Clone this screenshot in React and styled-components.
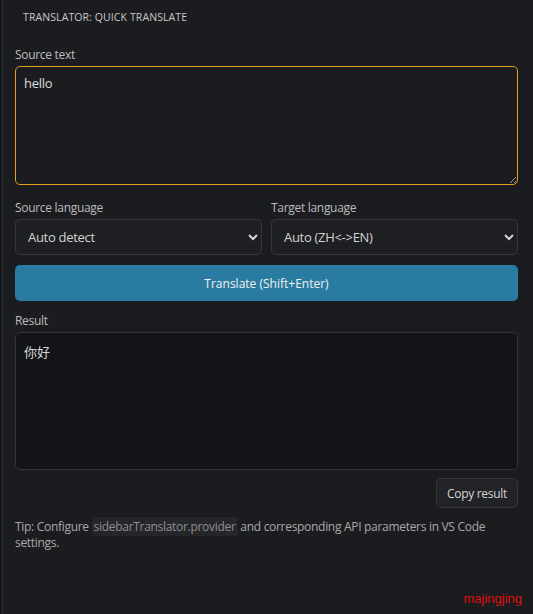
import React from 'react'
import styled, { createGlobalStyle } from 'styled-components'

const Global = createGlobalStyle`
    html, body {
        margin: 0;
        padding: 0;
        background: #1b1c1f;
    }
    * { box-sizing: border-box; }
`

const Panel = styled.div`
    width: 533px;
    height: 614px;
    background: #1b1c1f;
    border-left: 2px solid #141517;
    box-shadow: inset 1px 0 0 #2b2c2f;
    font-family: "Open Sans", "Noto Sans", "Noto Sans CJK SC", sans-serif;
    font-size: 12px;
    color: #cccccc;
    display: flex;
    flex-direction: column;
`

const Header = styled.div`
    height: 33px;
    padding: 0 0 0 21px;
    display: flex;
    align-items: center;
    font-size: 10.5px;
    letter-spacing: 0.1px;
    color: #c9c9c9;
    text-transform: uppercase;
`

const Body = styled.div`
    padding: 14px 15px 0 13px;
    display: flex;
    flex-direction: column;
`

const Label = styled.label`
    display: block;
    color: #bdbdbd;
    font-size: 12px;
    letter-spacing: -0.3px;
    line-height: 16px;
    margin-bottom: 3px;
`

const TextArea = styled.textarea`
    display: block;
    width: 100%;
    height: 119px;
    resize: vertical;
    background: #1b1c1f;
    color: #dcdcdc;
    border: 1px solid #e3a01f;
    border-radius: 5px;
    padding: 7px 8px;
    font-family: inherit;
    font-size: 13px;
    letter-spacing: -0.3px;
    outline: none;
`

const Row = styled.div`
    display: grid;
    grid-template-columns: 1fr 1fr;
    gap: 9px;
    margin-top: 15px;
`

const Select = styled.select`
    width: 100%;
    height: 36px;
    background: #1e1f22;
    color: #d4d4d4;
    border: 1px solid #37383b;
    border-radius: 5px;
    padding: 0 8px;
    font-family: inherit;
    font-size: 13px;
    letter-spacing: -0.3px;
    outline: none;
`

const PrimaryButton = styled.button`
    margin-top: 10px;
    width: 100%;
    height: 36px;
    border: none;
    border-radius: 5px;
    background: #2a7ba1;
    color: #f2f2f2;
    font-family: inherit;
    font-size: 12px;
    cursor: pointer;
`

const ResultSection = styled.div`
    margin-top: 12px;
`

const ResultBox = styled.div`
    height: 138px;
    background: #131417;
    border: 1px solid #323336;
    border-radius: 5px;
    padding: 9px 8px;
    color: #d6d6d6;
    font-size: 13px;
    white-space: pre-wrap;
`

const Actions = styled.div`
    display: flex;
    justify-content: flex-end;
    margin-top: 8px;
`

const GhostButton = styled.button`
    height: 30px;
    padding: 0 10px;
    background: #222326;
    color: #d4d4d4;
    border: 1px solid #36373a;
    border-radius: 5px;
    font-family: inherit;
    font-size: 12px;
    letter-spacing: -0.3px;
`

const Tip = styled.p`
    margin: 11px 0 0;
    color: #a9a9a9;
    font-size: 12px;
    letter-spacing: -0.3px;
    line-height: 16px;
`

const Code = styled.code`
    font-family: inherit;
    background: #252629;
    color: #8f8f8f;
    padding: 1px 2px;
    border-radius: 3px;
`

const Footer = styled.div`
    margin-top: auto;
    padding: 0 11px 8px 0;
    text-align: right;
    color: #e10d0d;
    font-family: "Liberation Sans", Arial, sans-serif;
    font-size: 13px;
`

export default function App() {
    return (
        <>
            <Global />
            <Panel>
                <Header>Translator: Quick Translate</Header>
                <Body>
                    <Label>Source text</Label>
                    <TextArea defaultValue="hello" />
                    <Row>
                        <div>
                            <Label>Source language</Label>
                            <Select defaultValue="auto">
                                <option value="auto">Auto detect</option>
                            </Select>
                        </div>
                        <div>
                            <Label>Target language</Label>
                            <Select defaultValue="auto">
                                <option value="auto">Auto (ZH&lt;-&gt;EN)</option>
                            </Select>
                        </div>
                    </Row>
                    <PrimaryButton>Translate (Shift+Enter)</PrimaryButton>
                    <ResultSection>
                        <Label>Result</Label>
                        <ResultBox>你好</ResultBox>
                    </ResultSection>
                    <Actions>
                        <GhostButton>Copy result</GhostButton>
                    </Actions>
                    <Tip>
                        Tip: Configure <Code>sidebarTranslator.provider</Code> and corresponding API parameters in VS Code settings.
                    </Tip>
                </Body>
                <Footer>majingjing</Footer>
            </Panel>
        </>
    )
}
